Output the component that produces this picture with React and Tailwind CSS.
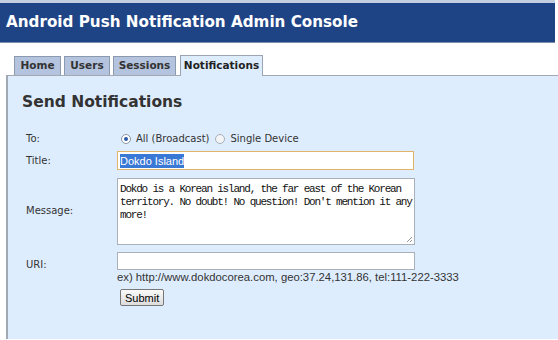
import React from "react";

const tabs = [
  { name: "Home", w: "w-[47px]" },
  { name: "Users", w: "w-[46px]" },
  { name: "Sessions", w: "w-[63px]" },
];

export default function App() {
  return (
    <div className="w-[558px] h-[340px] bg-white overflow-hidden font-['DejaVu_Sans',sans-serif]">
      <div className="w-[555px] h-[3px] bg-[#c3cee0]" />
      <div className="w-[555px] h-[40px] bg-[#1f4485] border-b border-[#7d8fae] flex items-center pl-[6px]">
        <h1 className="text-white font-bold text-[15.2px]">
          Android Push Notification Admin Console
        </h1>
      </div>
      <div className="flex items-end pl-[14px] mt-[12px] h-[20px] gap-[3px]">
        {tabs.map((t) => (
          <div
            key={t.name}
            className={`${t.w} h-[19px] bg-[#b5c4de] border border-b-0 border-[#8c9ab0] text-[10.5px] font-bold text-[#333] flex items-center justify-center`}
          >
            {t.name}
          </div>
        ))}
        <div className="w-[83px] ml-[1px] h-[21px] bg-[#deedfd] border border-b-0 border-[#9aa4b2] text-[10.5px] font-bold text-[#222] flex items-center justify-center relative top-[1px] z-10">
          Notifications
        </div>
      </div>
      <div className="ml-[6px] h-[264px] bg-[#deedfd] border-t border-l-2 border-[#a2a9b3] pl-[14px] pt-[15px] text-[10px] text-[#333]">
        <h2 className="text-[15.5px] font-bold text-[#333] leading-[22px]">Send Notifications</h2>
        <div className="grid grid-cols-[91px_300px] mt-[18px] gap-y-[5px] items-center pl-[4px]">
          <div>To:</div>
          <div className="flex items-center h-[14px] pl-[4px]">
            <span className="w-[10px] h-[10px] rounded-full border border-[#8a96a6] bg-white flex items-center justify-center">
              <span className="w-[4px] h-[4px] rounded-full bg-[#2a5aa8]" />
            </span>
            <span className="ml-[5px]">All (Broadcast)</span>
            <span className="ml-[6px] w-[10px] h-[10px] rounded-full border border-[#a8b0bb] bg-[#f2f4f6]" />
            <span className="ml-[5px]">Single Device</span>
          </div>
          <div>Title:</div>
          <div className="w-[297px] h-[19px] bg-white border border-[#e2b46a] flex items-center pl-[2px] font-['Liberation_Sans',sans-serif] text-[11px]">
            <span className="bg-[#3a78d6] text-white leading-[14px]">Dokdo Island</span>
          </div>
          <div>Message:</div>
          <div className="w-[298px] h-[67px] bg-white border border-[#aab0b8] mt-[3px] px-[2px] pt-[4px] font-['Liberation_Mono',monospace] text-[11px] tracking-[-1.2px] leading-[13px] text-[#111] relative whitespace-pre">
            {"Dokdo is a Korean island, the far east of the Korean\nterritory. No doubt! No question! Don't mention it any\nmore!"}
            <svg className="absolute right-[1px] bottom-[1px]" width="7" height="7" viewBox="0 0 7 7">
              <path d="M6 1 L1 6 M6 4 L4 6" stroke="#999" strokeWidth="1" />
            </svg>
          </div>
          <div className="self-start mt-[7px]">URI:</div>
          <div className="mt-[2px]">
            <div className="w-[298px] h-[18px] bg-white border border-[#aab0b8]" />
            <div className="-mt-[1px] whitespace-nowrap text-[#333] font-['Liberation_Sans',sans-serif] text-[11.3px] leading-[16px]">
              ex) http://www.dokdocorea.com, geo:37.24,131.86, tel:111-222-3333
            </div>
            <button className="mt-[4px] ml-[3px] h-[17px] px-[4px] border border-[#777] rounded-[2px] bg-gradient-to-b from-[#fafafa] to-[#dcdcdc] text-[11px] leading-[14px] text-black font-['Liberation_Sans',sans-serif]">
              Submit
            </button>
          </div>
        </div>
      </div>
    </div>
  );
}
